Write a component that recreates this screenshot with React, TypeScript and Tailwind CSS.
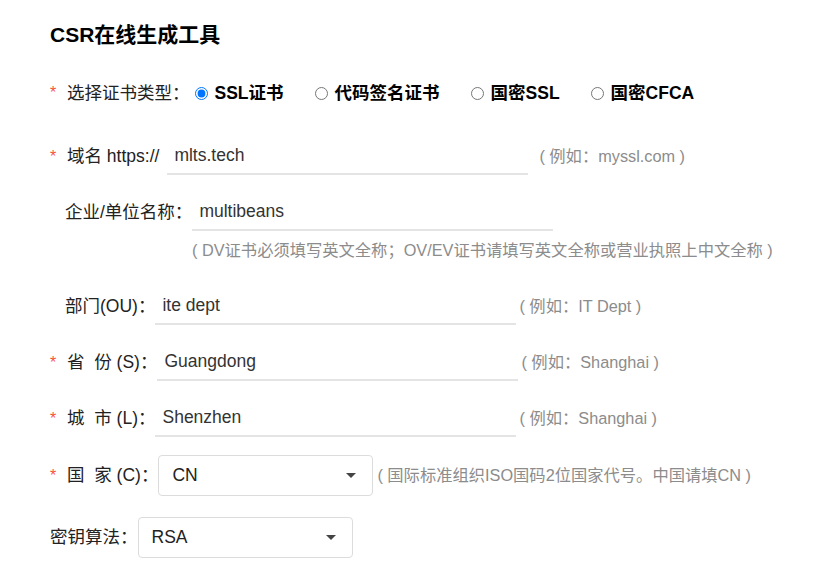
const font = { fontFamily: '"Liberation Sans", "Noto Sans CJK SC", sans-serif' };

function Star() {
    return <span className="w-[17px] shrink-0 text-[16px] text-[#f5533d]">*</span>;
}

function Hint({ text, className }: { text: string; className?: string }) {
    return <span className={'text-[16.3px] text-[#8c8c8c] whitespace-pre ' + (className ?? '')}>{text}</span>;
}

function TextInput({ value, w }: { value: string; w: string }) {
    return (
        <div className={'h-[37px] flex items-center border-b-2 border-[#e4e4e4] px-[7px] text-[17.5px] text-[#333] ' + w}>
            {value}
        </div>
    );
}

function Select({ value }: { value: string }) {
    return (
        <div className="w-[215px] h-[41px] flex items-center justify-between border border-[#dcdcdc] rounded-[4px] pl-[13px] pr-[16px] text-[17.5px] text-[#222]">
            <span>{value}</span>
            <svg width="10" height="5" viewBox="0 0 10 5">
                <path d="M0 0h10L5 5z" fill="#444" />
            </svg>
        </div>
    );
}

function Radio({ label, checked }: { label: string; checked?: boolean }) {
    return (
        <label className="flex items-center">
            <input type="radio" name="certType" defaultChecked={checked} className="w-[13px] h-[13px] m-0" />
            <span className="ml-[7px] text-[17.5px] font-bold text-black">{label}</span>
        </label>
    );
}

export default function App(): JSX.Element {
    return (
        <div style={font} className="w-[832px] h-[579px] bg-white pl-[50px] pt-[22px] text-[#222] overflow-hidden">
            <h1 className="text-[21px] font-bold text-black leading-[26px]">CSR在线生成工具</h1>

            <div className="mt-[31px] h-[28px] flex items-center">
                <Star />
                <span className="text-[17.5px]">选择证书类型：</span>
                <div className="ml-[5px] flex items-center gap-[31px]">
                    <Radio label="SSL证书" checked />
                    <Radio label="代码签名证书" />
                    <Radio label="国密SSL" />
                    <Radio label="国密CFCA" />
                </div>
            </div>

            <div className="mt-[31px] flex items-center">
                <Star />
                <span className="text-[17.5px] whitespace-pre">域名 https://</span>
                <TextInput value="mlts.tech" w="ml-[8px] w-[361px]" />
                <Hint className="ml-[11px]" text="( 例如：myssl.com )" />
            </div>

            <div className="mt-[19px] pl-[15px] flex items-center">
                <span className="text-[17.5px]">企业/单位名称：</span>
                <TextInput value="multibeans" w="w-[361px]" />
            </div>
            <div className="pl-[142px] mt-[7px]">
                <Hint text="( DV证书必须填写英文全称；OV/EV证书请填写英文全称或营业执照上中文全称 )" />
            </div>

            <div className="mt-[25px] pl-[15px] flex items-center">
                <span className="text-[17.5px]">部门(OU)：</span>
                <TextInput value="ite dept" w="w-[361px]" />
                <Hint className="ml-[3px]" text="( 例如：IT Dept )" />
            </div>

            <div className="mt-[19px] flex items-center">
                <Star />
                <span className="text-[17.5px] whitespace-pre">省  份 (S)：</span>
                <TextInput value="Guangdong" w="w-[361px]" />
                <Hint className="ml-[3px]" text="( 例如：Shanghai )" />
            </div>

            <div className="mt-[19px] flex items-center">
                <Star />
                <span className="text-[17.5px] whitespace-pre">城  市 (L)：</span>
                <TextInput value="Shenzhen" w="w-[361px]" />
                <Hint className="ml-[3px]" text="( 例如：Shanghai )" />
            </div>

            <div className="mt-[18px] flex items-center">
                <Star />
                <span className="text-[17.5px] whitespace-pre">国  家 (C)：</span>
                <Select value="CN" />
                <Hint className="ml-[4px]" text="( 国际标准组织ISO国码2位国家代号。中国请填CN )" />
            </div>

            <div className="mt-[21px] flex items-center">
                <span className="text-[17.5px]">密钥算法：</span>
                <Select value="RSA" />
            </div>
        </div>
    );
}
